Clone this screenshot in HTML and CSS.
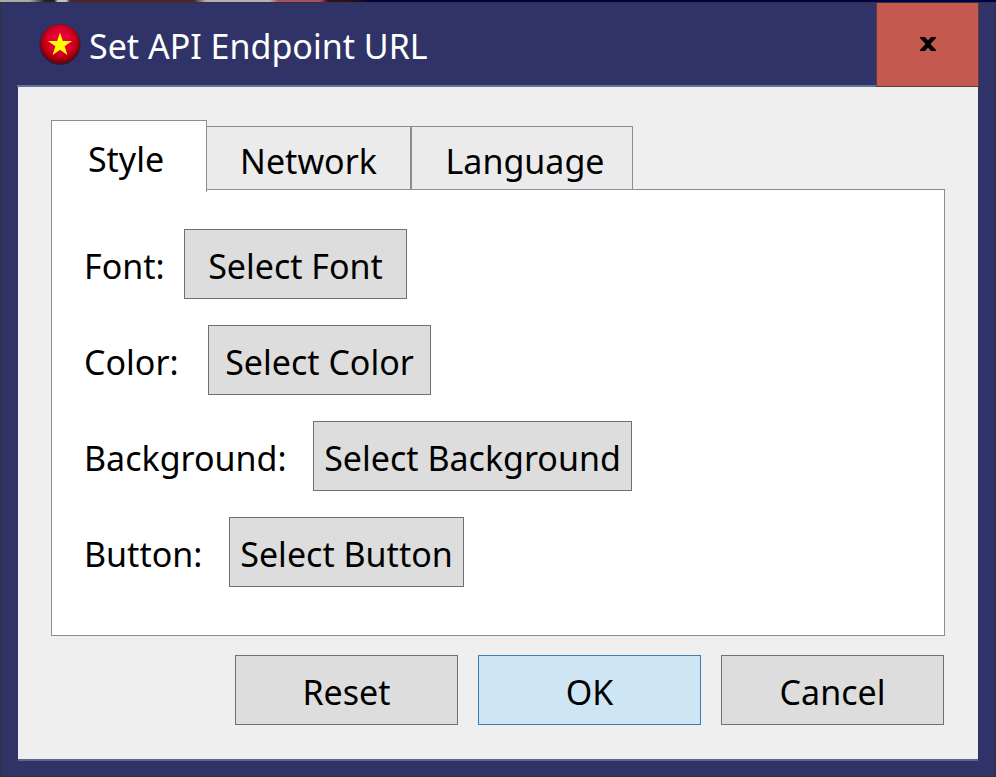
FILE: index.html
```html
<!DOCTYPE html>
<html lang="en">
<head>
<meta charset="utf-8">
<title>Set API Endpoint URL</title>
<link rel="stylesheet" href="styles.css">
</head>
<body>
<main class="window">
  <header class="titlebar">
    <svg class="app-icon" viewBox="0 0 42 42" aria-hidden="true">
      <defs>
        <radialGradient id="ball" cx="50%" cy="42%" r="56%">
          <stop offset="0" stop-color="#f2003c"/>
          <stop offset="0.5" stop-color="#e00030"/>
          <stop offset="0.78" stop-color="#b8000c"/>
          <stop offset="1" stop-color="#700008"/>
        </radialGradient>
      </defs>
      <circle cx="21" cy="21.5" r="20.5" fill="#22204a"/>
      <circle cx="21" cy="21" r="19.7" fill="url(#ball)"/>
      <path d="M21 9.5 23.8 18H33L25.6 23.2 28.4 32 21 26.7 13.6 32 16.4 23.2 9 18H18.2Z" fill="#ffff00"/>
    </svg>
    <h1 class="title">Set API Endpoint URL</h1>
    <button class="close" type="button" aria-label="Close">
      <svg class="close-icon" viewBox="0 0 16 14" aria-hidden="true">
        <path d="M0 0H5L8 3.6 11 0H16V1L10.5 7 16 13V14H11L8 10.4 5 14H0V13L5.5 7 0 1Z" fill="#000"/>
      </svg>
    </button>
  </header>
  <form class="client">
    <div class="tabs" role="tablist">
      <button class="tab tab-active" type="button" role="tab" aria-selected="true">Style</button>
      <button class="tab tab-network" type="button" role="tab" aria-selected="false">Network</button>
      <button class="tab tab-language" type="button" role="tab" aria-selected="false">Language</button>
    </div>
    <section class="panel" role="tabpanel">
      <div class="row row-font"><label for="font">Font:</label><button class="btn" id="font" type="button">Select Font</button></div>
      <div class="row row-color"><label for="color">Color:</label><button class="btn" id="color" type="button">Select Color</button></div>
      <div class="row row-background"><label for="background">Background:</label><button class="btn" id="background" type="button">Select Background</button></div>
      <div class="row row-button"><label for="button">Button:</label><button class="btn" id="button" type="button">Select Button</button></div>
    </section>
    <footer class="actions">
      <button class="btn" type="reset">Reset</button>
      <button class="btn btn-default" type="button">OK</button>
      <button class="btn" type="button">Cancel</button>
    </footer>
  </form>
</main>
</body>
</html>
```
FILE: styles.css
```css
* { box-sizing: border-box; }

body {
  margin: 0;
  padding-top: 2px;
  min-height: 100vh;
  display: flex;
  background: linear-gradient(90deg, #a9aaa9 0, #a9aaa9 30px, #1c2226 45px, #1c2226 54px, #c0c4d0 58px, #c0c4d0 66px, #4c2430 70px, #4c2430 194px, #b4b0b4 206px, #b4b0b4 270px, #a85068 278px, #a85068 320px, #2a1020 328px, #2a1020 348px, #000048 370px);
  color: #000;
  font-family: "Segoe UI", "Noto Sans", sans-serif;
  font-size: 34px;
  line-height: 48px;
}

button {
  font: inherit;
  color: inherit;
  margin: 0;
  white-space: nowrap;
}

.window {
  flex: 1;
  display: flex;
  flex-direction: column;
  border: 1px solid #333;
  padding: 0 16px 17px;
  background: #303367;
}

.titlebar {
  display: flex;
  align-items: center;
  height: 84px;
  padding-left: 22px;
  border-bottom: 2px solid #66719a;
}

.app-icon { width: 42px; height: 42px; }

.title {
  flex: 1;
  margin: 0 0 0 8px;
  padding-top: 4px;
  color: #fff;
  font-size: 34px;
  font-weight: 400;
}

.close {
  align-self: flex-start;
  flex: none;
  width: 103px;
  height: 84px;
  padding: 0 0 2px;
  border: 1px solid #623c3c;
  border-top: 0;
  background: #c3594f;
}

.close-icon {
  display: block;
  width: 16px;
  height: 14px;
  margin: 0 auto;
}

.client {
  flex: 1;
  display: flex;
  flex-direction: column;
  margin: 0 1px;
  padding: 33px 33px 34px;
  background: #efefef;
  box-shadow: 0 2px #5b6990;
}

.tabs {
  display: flex;
  align-items: flex-end;
}

.tab {
  height: 64px;
  padding: 6px 0 0;
  border: 1px solid #8b8c95;
  border-left-width: 0;
  background: #ebebeb;
}

.tab-active {
  position: relative;
  width: 156px;
  height: 72px;
  padding: 4px 6px 0 0;
  border-left-width: 1px;
  border-bottom: 0;
  background: #fff;
  margin-bottom: -2px;
}

.tab-network { width: 205px; border-right-width: 2px; }
.tab-language { width: 221px; padding-left: 6px; }

.panel {
  flex: 1;
  display: flex;
  flex-direction: column;
  gap: 26px;
  margin-top: -1px;
  padding: 39px 32px;
  border: 1px solid #8b8c95;
  background: #fff;
}

.row {
  display: grid;
  justify-content: start;
  align-items: center;
}

.row label { padding-top: 4px; }

.row-font { grid-template-columns: 100px 223px; }
.row-color { grid-template-columns: 124px 223px; }
.row-background { grid-template-columns: 229px 319px; }
.row-button { grid-template-columns: 145px 235px; }

.btn {
  min-width: 223px;
  height: 70px;
  padding: 4px 0 0;
  border: 1px solid #707070;
  background: #ddd;
}

.actions {
  display: flex;
  justify-content: flex-end;
  gap: 20px;
  padding: 19px 1px 0 0;
}

.btn-default {
  border-color: #3c7fb1;
  background: #cee6f4;
}
```
